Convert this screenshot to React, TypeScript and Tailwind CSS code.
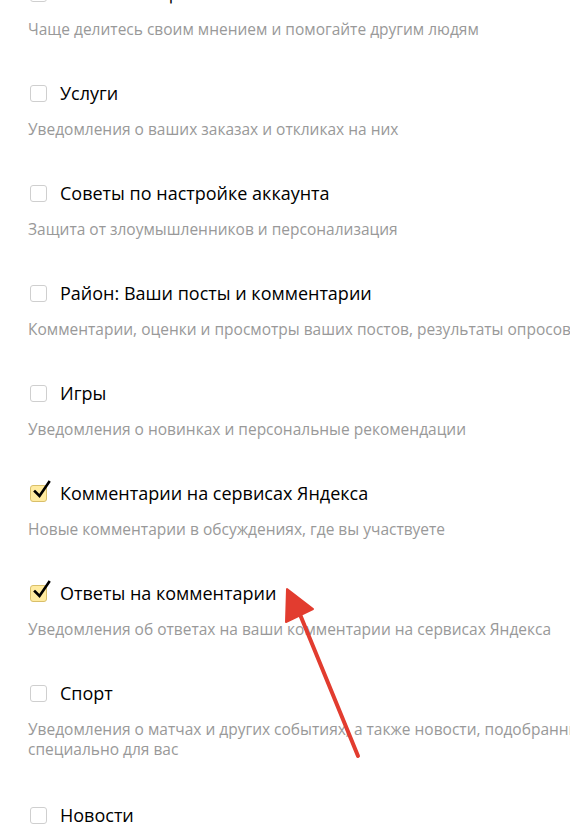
type Item = { title: string; desc?: string; checked?: boolean };

const items: Item[] = [
  { title: 'Отзывы и оценки', desc: 'Чаще делитесь своим мнением и помогайте другим людям' },
  { title: 'Услуги', desc: 'Уведомления о ваших заказах и откликах на них' },
  { title: 'Советы по настройке аккаунта', desc: 'Защита от злоумышленников и персонализация' },
  { title: 'Район: Ваши посты и комментарии', desc: 'Комментарии, оценки и просмотры ваших постов, результаты опросов' },
  { title: 'Игры', desc: 'Уведомления о новинках и персональные рекомендации' },
  { title: 'Комментарии на сервисах Яндекса', desc: 'Новые комментарии в обсуждениях, где вы участвуете', checked: true },
  { title: 'Ответы на комментарии', desc: 'Уведомления об ответах на ваши комментарии на сервисах Яндекса', checked: true },
  { title: 'Спорт', desc: 'Уведомления о матчах и других событиях, а также новости, подобранные специально для вас' },
  { title: 'Новости' },
];

function Box({ checked }: { checked?: boolean }) {
  if (checked) {
    return (
      <span className="relative w-[17px] h-[17px] shrink-0 rounded-[3px] bg-[#ffeba0] border border-[#d9bf6a]">
        <svg className="absolute left-[1px] -top-[6px]" width="20" height="20" viewBox="0 0 20 20">
          <path d="M3 11.5 L7.5 16 L17 2" fill="none" stroke="#000" strokeWidth="2.6" strokeLinecap="square" />
        </svg>
      </span>
    );
  }
  return <span className="w-[17px] h-[17px] shrink-0 rounded-[3px] bg-white border border-[#cfcfcf]" />;
}

export default function App() {
  return (
    <div className="relative w-[570px] h-[832px] overflow-hidden bg-white font-['Open_Sans',sans-serif]">
      <div className="-mt-[19px] pl-[30px] w-[650px]">
        {items.map(item => (
          <div key={item.title} className="h-[100px] first:h-[100px] has-[p.two]:h-[122px]">
            <label className="flex items-center gap-[13px] h-6">
              <Box checked={item.checked} />
              <span className="text-[18px] leading-6 text-black">{item.title}</span>
            </label>
            {item.desc && (
              <p className={item.desc.length > 70 ? 'two mt-[14px] -ml-[2px] text-[15.5px] leading-5 text-[#999999]' : 'mt-[14px] -ml-[2px] text-[15.5px] leading-5 text-[#999999]'}>
                {item.desc}
              </p>
            )}
          </div>
        ))}
      </div>

      {/* стрелка поверх списка */}
      <svg className="absolute left-0 top-0 pointer-events-none" width="570" height="832">
        <line x1="358" y1="756" x2="299" y2="612" stroke="#e23c2f" strokeWidth="4" strokeLinecap="round" />
        <polygon points="287,589 286,622 313,609" fill="#e23c2f" stroke="#e23c2f" strokeWidth="2" strokeLinejoin="round" />
      </svg>
    </div>
  );
}
